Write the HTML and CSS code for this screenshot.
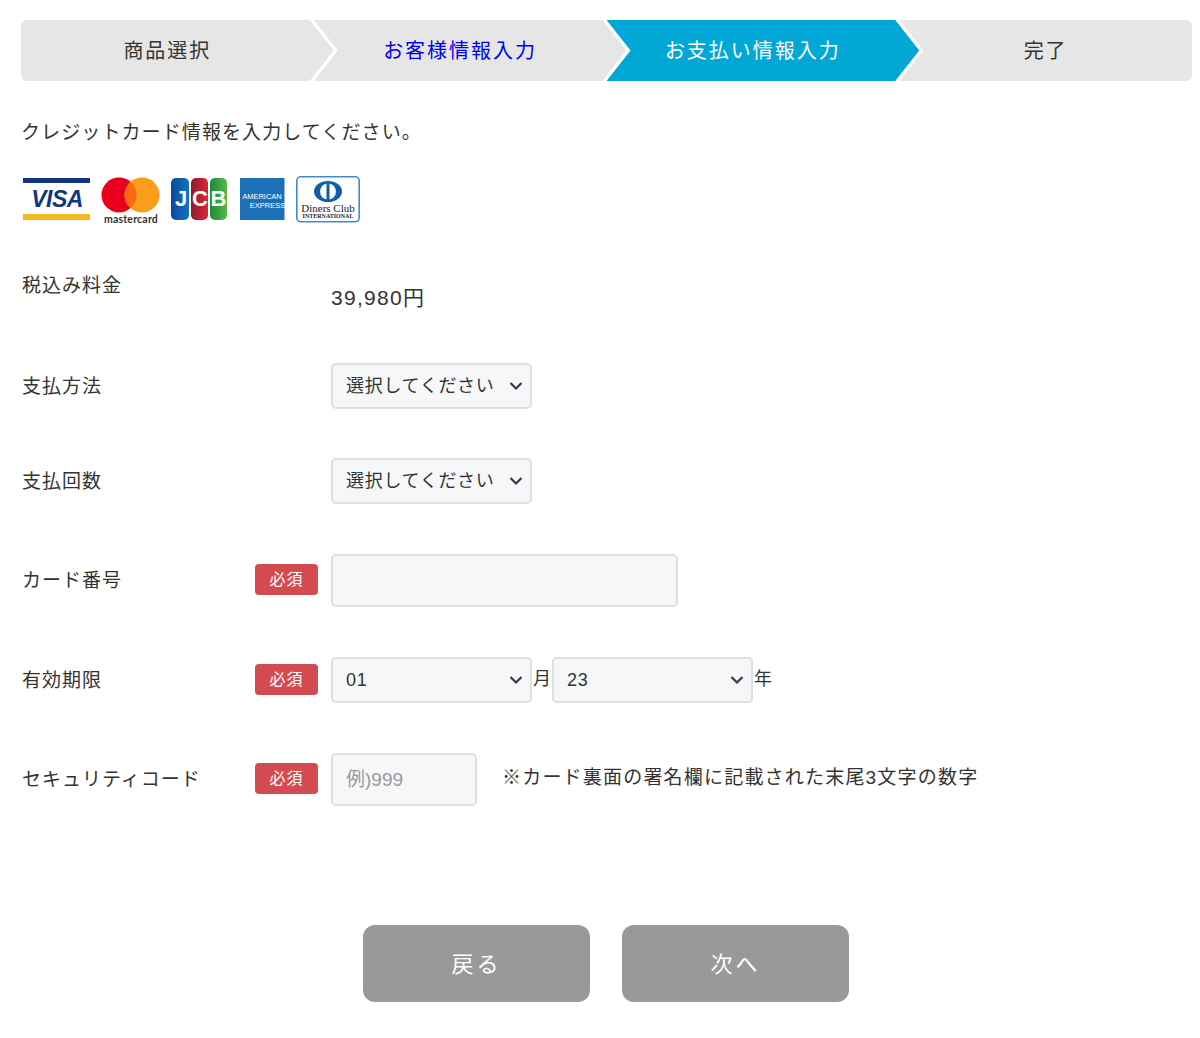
FILE: index.html
```html
<!DOCTYPE html>
<html lang="ja">

<head>
	<meta charset="UTF-8">
	<meta name="viewport" content="width=device-width, initial-scale=1.0">
	<title>お支払い情報入力</title>
	<link rel="stylesheet" href="styles.css">
</head>

<body>

	<ol class="steps">
		<li class="step">商品選択</li>
		<li class="step"><a class="step-link" href="#">お客様情報入力</a></li>
		<li class="step step-active">お支払い情報入力</li>
		<li class="step">完了</li>
	</ol>

	<p class="intro">クレジットカード情報を入力してください。</p>

	<div class="card-logos">
		<svg class="logo" width="67" height="46" viewBox="0 0 67 46">
			<rect x="0" y="2" width="67" height="5" fill="#14357f" />
			<rect x="0" y="38" width="67" height="6" fill="#f2b823" />
			<text class="logo-visa" x="34" y="31" text-anchor="middle">VISA</text>
		</svg>
		<svg class="logo" width="60" height="50" viewBox="0 0 60 50">
			<circle cx="18" cy="19" r="17.500" fill="#e9001c" />
			<circle cx="41" cy="19" r="17.500" fill="#f89e1c" />
			<path d="M29.500 5.800a17.500 17.500 0 0 1 0 26.400a17.500 17.500 0 0 1 0-26.400z" fill="#fb6a10" />
			<text class="logo-mc" x="30" y="47" text-anchor="middle">mastercard</text>
		</svg>
		<svg class="logo" width="57" height="46" viewBox="0 0 57 46">
			<defs>
				<linearGradient id="jcb-blue" x1="0" x2="1" y1="0" y2="0">
					<stop offset="0" stop-color="#0a4a9c" />
					<stop offset="1" stop-color="#0f76c0" />
				</linearGradient>
				<linearGradient id="jcb-red" x1="0" x2="1" y1="0" y2="0">
					<stop offset="0" stop-color="#8f1c30" />
					<stop offset="1" stop-color="#dd2438" />
				</linearGradient>
				<linearGradient id="jcb-green" x1="0" x2="1" y1="0" y2="0">
					<stop offset="0" stop-color="#1a8a3a" />
					<stop offset="1" stop-color="#58b947" />
				</linearGradient>
			</defs>
			<rect x="0" y="2" width="18" height="42" rx="5" fill="url(#jcb-blue)" />
			<rect x="20" y="2" width="17" height="42" rx="5" fill="url(#jcb-red)" />
			<rect x="39" y="2" width="17" height="42" rx="5" fill="url(#jcb-green)" />
			<text class="logo-jcb" x="10" y="30" text-anchor="middle">J</text>
			<text class="logo-jcb" x="29" y="30" text-anchor="middle">C</text>
			<text class="logo-jcb" x="47.500" y="30" text-anchor="middle">B</text>
		</svg>
		<svg class="logo" width="45" height="46" viewBox="0 0 45 46">
			<rect x="0" y="2" width="44.500" height="42" fill="#1c70b8" />
			<text class="logo-amex" x="22" y="23" text-anchor="middle">AMERICAN</text>
			<text class="logo-amex" x="27.500" y="32" text-anchor="middle">EXPRESS</text>
		</svg>
		<svg class="logo" width="65" height="47" viewBox="0 0 65 47">
			<rect x="0.800" y="0.800" width="62.400" height="45" rx="4" fill="#fff" stroke="#3f8ccb" stroke-width="1.600" />
			<ellipse cx="32" cy="15.500" rx="14" ry="10.500" fill="#0f5ea8" />
			<ellipse cx="32" cy="15.500" rx="8" ry="8" fill="#fff" />
			<rect x="30.500" y="7" width="3" height="17" fill="#0f5ea8" />
			<text class="logo-diners" x="32" y="36" text-anchor="middle">Diners Club</text>
			<text class="logo-diners-sub" x="32" y="42" text-anchor="middle">INTERNATIONAL</text>
		</svg>
	</div>

	<form class="pay-form">
		<div class="form-row form-row-price">
			<label class="form-label">税込み料金</label>
			<span></span>
			<div class="form-value">39,980円</div>
		</div>

		<div class="form-row">
			<label class="form-label">支払方法</label>
			<span></span>
			<div class="form-value">
				<select class="form-select">
					<option>選択してください</option>
				</select>
			</div>
		</div>

		<div class="form-row">
			<label class="form-label">支払回数</label>
			<span></span>
			<div class="form-value">
				<select class="form-select">
					<option>選択してください</option>
				</select>
			</div>
		</div>

		<div class="form-row">
			<label class="form-label">カード番号</label>
			<span class="badge">必須</span>
			<div class="form-value">
				<input class="form-input input-card" type="text">
			</div>
		</div>

		<div class="form-row">
			<label class="form-label">有効期限</label>
			<span class="badge">必須</span>
			<div class="form-value">
				<select class="form-select">
					<option>01</option>
				</select>
				<span class="unit">月</span>
				<select class="form-select">
					<option>23</option>
				</select>
				<span class="unit">年</span>
			</div>
		</div>

		<div class="form-row">
			<label class="form-label">セキュリティコード</label>
			<span class="badge">必須</span>
			<div class="form-value">
				<input class="form-input input-code" type="text" placeholder="例)999">
				<span class="hint">※カード裏面の署名欄に記載された末尾3文字の数字</span>
			</div>
		</div>

		<div class="form-buttons">
			<button class="form-button" type="button">戻る</button>
			<button class="form-button" type="button">次へ</button>
		</div>
	</form>

</body>

</html>
```

FILE: styles.css
```css
* {
	margin: 0;
	padding: 0;
	box-sizing: border-box;
	font-family: "Liberation Sans", "Noto Sans CJK JP", sans-serif;
}

body {
	padding: 20px 8px 36px 21px;
	color: #333;
	background: #fff;
}

.steps {
	display: flex;
	height: 61px;
	list-style: none;
	isolation: isolate;
}

.step {
	flex: 1;
	position: relative;
	padding-top: 1px;
	text-align: center;
	font-size: 20px;
	letter-spacing: 2px;
	line-height: 61px;
}

.step::before {
	content: '';
	position: absolute;
	top: 0;
	bottom: 0;
	left: 0;
	right: -20px;
	z-index: -1;
	background: #e6e6e6;
	clip-path: polygon(0 0, calc(100% - 24px) 0, 100% 50%, calc(100% - 24px) 100%, 0 100%, 24px 50%);
}

.step:first-child::before {
	border-radius: 6px 0 0 6px;
	clip-path: polygon(0 0, calc(100% - 24px) 0, 100% 50%, calc(100% - 24px) 100%, 0 100%);
}

.step:last-child::before {
	right: 0;
	border-radius: 0 6px 6px 0;
	clip-path: polygon(0 0, 100% 0, 100% 100%, 0 100%, 24px 50%);
}

.step-active {
	color: #fff;
}

.step-active::before {
	background: #02a7d6;
}

.step-link {
	color: #0000ee;
	text-decoration: none;
}

.intro {
	margin-top: 40px;
	font-size: 19px;
	letter-spacing: 1.100px;
	line-height: 24px;
}

.card-logos {
	display: flex;
	align-items: flex-start;
	height: 48px;
	margin-top: 31px;
	margin-left: 2px;
}

.logo {
	flex: none;
	margin-right: 11px;
}

.logo:nth-child(2) {
	margin-right: 10px;
}

.logo:nth-child(3) {
	margin-right: 12px;
}

.logo-visa {
	font-family: "Liberation Sans", sans-serif;
	font-size: 23px;
	font-weight: 700;
	font-style: italic;
	letter-spacing: -.5px;
	fill: #14357f;
}

.logo-mc {
	font-family: "Lato", sans-serif;
	font-size: 10.500px;
	font-weight: 700;
	letter-spacing: .2px;
	fill: #333;
}

.logo-jcb {
	font-family: "Liberation Sans", sans-serif;
	font-size: 22px;
	font-weight: 700;
	fill: #fff;
}

.logo-amex {
	font-family: "Liberation Sans", sans-serif;
	font-size: 7.500px;
	fill: #fff;
}

.logo-diners {
	font-family: "Liberation Serif", serif;
	font-size: 11px;
	fill: #222;
}

.logo-diners-sub {
	font-family: "Liberation Serif", serif;
	font-size: 6px;
	font-weight: 700;
	fill: #222;
}

.pay-form {
	margin-top: 50px;
	margin-left: 1px;
}

.form-row {
	display: grid;
	grid-template-columns: 233px 76px 1fr;
	align-items: center;
	margin-bottom: 50px;
}

.form-row:nth-child(2) {
	margin-bottom: 49px;
}

.form-row-price {
	align-items: start;
	height: 39px;
}

.form-label {
	margin-top: 1px;
	font-size: 19px;
	letter-spacing: 1px;
	line-height: 24px;
}

.form-row-price .form-label {
	margin-top: 0;
}

.form-row-price .form-value {
	padding-top: 12px;
	font-size: 21px;
	letter-spacing: 1.300px;
	line-height: 24px;
}

.form-value {
	display: flex;
	align-items: center;
}

.badge {
	width: 63px;
	height: 31px;
	margin-bottom: 2px;
	background: #d34b4f;
	border-radius: 4px;
	color: #fff;
	font-size: 16px;
	letter-spacing: 1px;
	line-height: 31px;
	text-align: center;
}

.form-select {
	appearance: none;
	width: 201px;
	height: 46px;
	padding-left: 13px;
	border: solid 2px #dcdfe3;
	border-radius: 5px;
	outline: 0;
	background: #f6f7f9 url("data:image/svg+xml,%3Csvg xmlns='http://www.w3.org/2000/svg' width='14' height='10' viewBox='0 0 14 10'%3E%3Cpath d='M1.500 2l5.500 5.500L12.500 2' fill='none' stroke='%23343a40' stroke-width='2.200'/%3E%3C/svg%3E") no-repeat right 7px center;
	color: #333;
	font-size: 18px;
	letter-spacing: .7px;
}

.unit {
	width: 20px;
	padding: 0 0 6px 1px;
	font-size: 18px;
}

.form-input {
	height: 53px;
	padding-left: 13px;
	border: solid 2px #dcdfe3;
	border-radius: 5px;
	outline: 0;
	background: #f6f7f9;
	font-size: 19px;
}

.form-input::placeholder {
	color: #999;
}

.input-card {
	width: 347px;
}

.input-code {
	width: 146px;
}

.hint {
	margin-left: 25px;
	margin-bottom: 8px;
	font-size: 19px;
	letter-spacing: 1.200px;
}

.form-buttons {
	display: flex;
	justify-content: center;
	gap: 32px;
	margin-top: 119px;
	padding-right: 2px;
}

.form-button {
	width: 227px;
	height: 77px;
	padding-bottom: 4px;
	border: 0;
	border-radius: 12px;
	background: #999;
	color: #fff;
	font-size: 22px;
	letter-spacing: 3px;
}
```
